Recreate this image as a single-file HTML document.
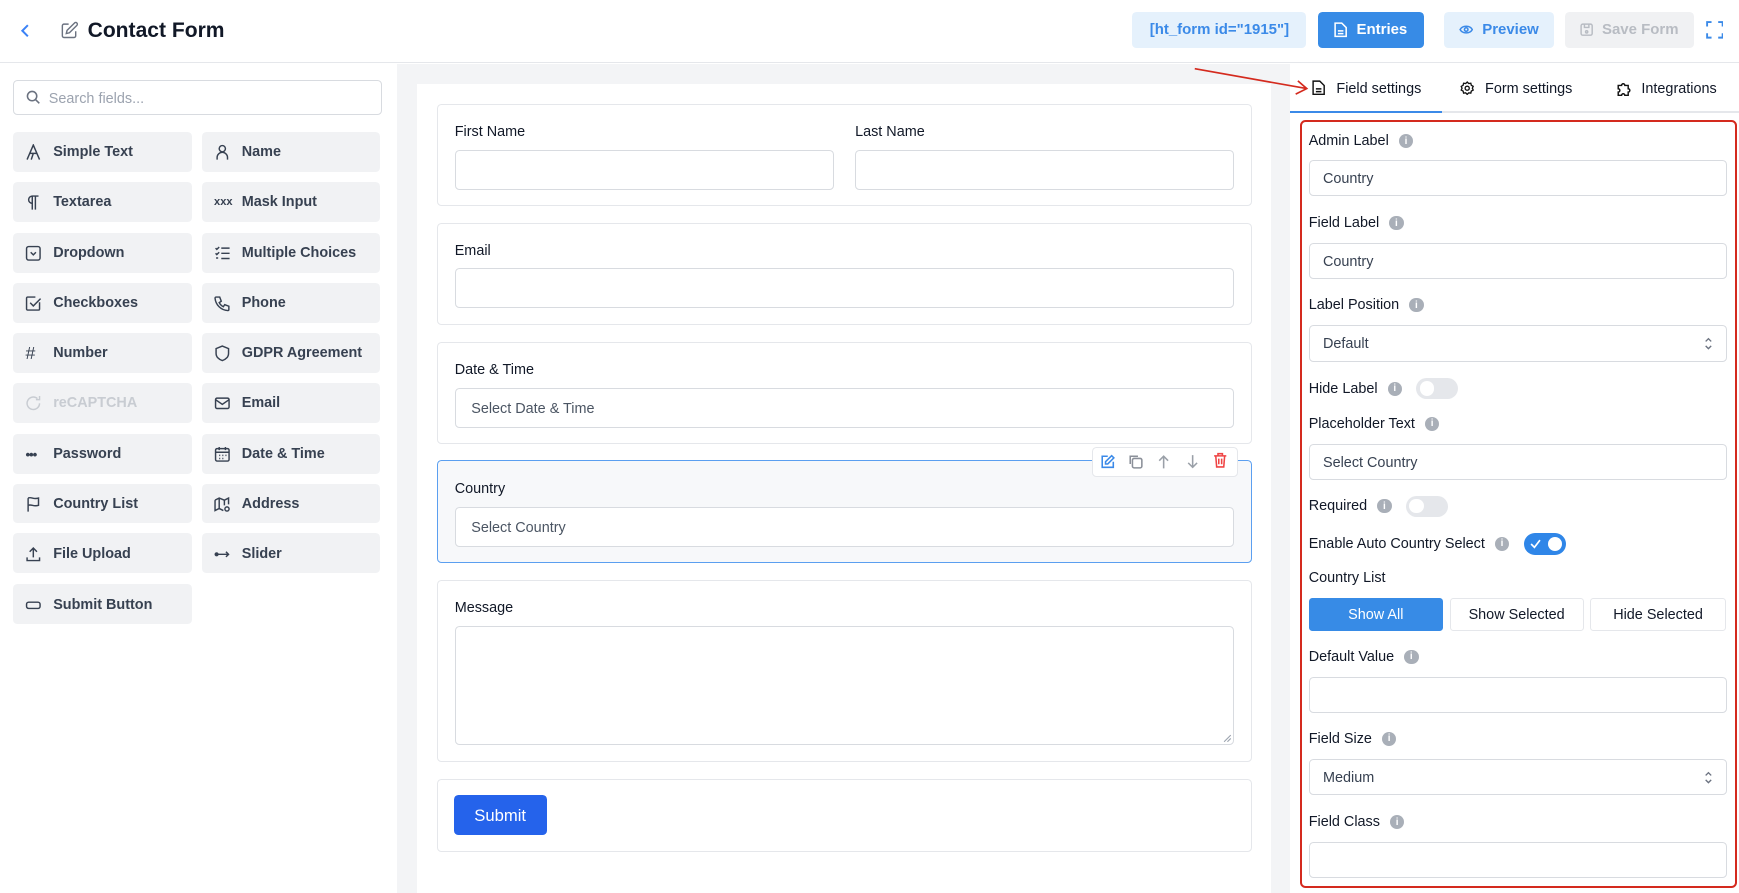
<!DOCTYPE html>
<html><head><meta charset="utf-8"><style>
*{box-sizing:border-box;margin:0;padding:0}
html,body{width:1739px;height:893px;overflow:hidden;background:#fff}
body{font-family:"Liberation Sans",Arial,sans-serif;color:#111827}
#w{position:absolute;left:0;top:0;width:1568px;height:805px;zoom:1.10906}
.a{position:absolute}
.hdr{left:0;top:0;width:1568px;height:57px;border-bottom:1px solid #e5e7eb;background:#fff}
.btn{position:absolute;top:11px;height:32px;border-radius:4px;font-size:13.5px;font-weight:bold;display:flex;align-items:center;justify-content:center;gap:8px}
.fb{position:absolute;width:161px;height:36px;background:#f1f2f4;border-radius:4px;font-size:13px;font-weight:bold;color:#374151;display:flex;align-items:center;padding-left:11px;gap:10px;padding-top:1px}
.fb svg{width:15px;height:15px;flex:none}
.card{position:absolute;left:394px;width:735px;border:1px solid #e5e7eb;border-radius:4px;background:#fff}
.lbl{position:absolute;font-size:13px;color:#111827;margin-top:1px}
.inp{position:absolute;height:36px;border:1px solid #d8dbe0;border-radius:4px;background:#fff;font-size:13px;color:#4b5563;display:flex;align-items:center;padding-left:14px;padding-top:2px}
.rl{position:absolute;left:1180px;font-size:13px;color:#111827;display:flex;align-items:center;gap:9px;margin-top:1px}
.i{width:13px;height:13px;border-radius:50%;background:#a9afb8;color:#fff;font-size:9px;font-weight:bold;display:inline-flex;align-items:center;justify-content:center}
.ri{position:absolute;left:1180px;width:377px;height:33px;border:1px solid #d8dbe0;border-radius:4px;font-size:13px;color:#374151;display:flex;align-items:center;padding-left:12px;padding-top:2px}
.tg{width:38px;height:19px;border-radius:10px;background:#e5e7eb;position:relative;margin-left:4px}
.tg:after{content:"";position:absolute;left:3px;top:3px;width:13px;height:13px;border-radius:50%;background:#fff}
.tg.on{background:#2f86e8}
.tg.on:after{left:22px}
.chev{position:absolute;right:12px;top:10px}
</style></head><body><div id="w">
<div class="a hdr"></div>
<svg class="a" style="left:17px;top:21px" width="12" height="14" viewBox="0 0 12 14"><path d="M8 2L3 7l5 5" fill="none" stroke="#3b82f6" stroke-width="1.8"/></svg>
<svg class="a" style="left:54px;top:19px" width="17" height="17" viewBox="0 0 24 24" fill="none" stroke="#6b7280" stroke-width="1.8"><path d="M11 4H5a2 2 0 00-2 2v13a2 2 0 002 2h13a2 2 0 002-2v-6"/><path d="M18.5 2.5a2.1 2.1 0 013 3L12 15l-4 1 1-4z"/></svg>
<div class="a" style="left:79px;top:17px;font-size:19px;font-weight:bold">Contact Form</div>
<div class="btn" style="left:1021px;width:157px;background:#e5f1fc;color:#3b8ae8;font-weight:bold">[ht_form id="1915"]</div>
<div class="btn" style="left:1188px;width:96px;background:#378be6;color:#fff"><svg width="12" height="14" viewBox="0 0 12 14" fill="none" stroke="#fff" stroke-width="1.4"><path d="M1 1h6l4 4v8H1z M3.5 8h5M3.5 10.5h5"/></svg>Entries</div>
<div class="btn" style="left:1302px;width:99px;background:#e5f1fc;color:#3b8ae8"><svg width="13" height="10" viewBox="0 0 13 10" fill="none" stroke="#3b8ae8" stroke-width="1.4"><path d="M1 5c2-4 9-4 11 0c-2 4-9 4-11 0z"/><circle cx="6.5" cy="5" r="1.6"/></svg>Preview</div>
<div class="btn" style="left:1411px;width:116px;background:#f0f1f3;color:#b8bcc3"><svg width="12" height="12" viewBox="0 0 12 12" fill="none" stroke="#b8bcc3" stroke-width="1.3"><rect x="1" y="1" width="10" height="10" rx="1.5"/><path d="M4 1v3h4V1"/><circle cx="6" cy="8" r="1"/></svg>Save Form</div>
<svg class="a" style="left:1538px;top:19px" width="16" height="16" viewBox="0 0 16 16" fill="none" stroke="#3b8ae8" stroke-width="1.7"><path d="M1 5V1h4M11 1h4v4M15 11v4h-4M5 15H1v-4"/></svg>

<div class="a" style="left:12px;top:72px;width:332px;height:32px;border:1px solid #d8dbe0;border-radius:4px"></div>
<svg class="a" style="left:23px;top:81px" width="13" height="13" viewBox="0 0 13 13" fill="none" stroke="#6b7280" stroke-width="1.4"><circle cx="5.5" cy="5.5" r="4.2"/><path d="M8.7 8.7L12 12"/></svg>
<div class="a" style="left:44px;top:82px;font-size:13px;color:#9ca3af">Search fields...</div>

<div class="fb" style="left:12px;top:119px"><svg viewBox="0 0 16 16" fill="none" stroke="#374151" stroke-width="1.4"><path d="M2 15L8 1l6 14M5 9h6M6 15L8 9"/></svg>Simple Text</div>
<div class="fb" style="left:182px;top:119px"><svg viewBox="0 0 16 16" fill="none" stroke="#374151" stroke-width="1.4"><circle cx="8" cy="4.5" r="3"/><path d="M3 15v-2a5 5 0 0110 0v2"/></svg>Name</div>
<div class="fb" style="left:12px;top:164px"><svg viewBox="0 0 16 16" fill="none" stroke="#374151" stroke-width="1.4"><path d="M7 15V2h6M10 2v13M7 2a3.5 3.5 0 000 7"/></svg>Textarea</div>
<div class="fb" style="left:182px;top:164px"><span style="font-size:10px;width:15px">xxx</span>Mask Input</div>
<div class="fb" style="left:12px;top:210px"><svg viewBox="0 0 16 16" fill="none" stroke="#374151" stroke-width="1.4"><rect x="1.5" y="1.5" width="13" height="13" rx="2"/><path d="M5.5 7l2.5 2.5L10.5 7"/></svg>Dropdown</div>
<div class="fb" style="left:182px;top:210px"><svg viewBox="0 0 16 16" fill="none" stroke="#374151" stroke-width="1.4"><path d="M7 3h8M7 8h8M7 13h8M1.5 3l1.2 1.2L5 2M1.5 8l1.2 1.2L5 7M2 12.5h2"/></svg>Multiple Choices</div>
<div class="fb" style="left:12px;top:255px"><svg viewBox="0 0 16 16" fill="none" stroke="#374151" stroke-width="1.4"><path d="M14 7v6.5a1 1 0 01-1 1H2.5a1 1 0 01-1-1V3a1 1 0 011-1H10"/><path d="M5 7.5l3 3 7-7"/></svg>Checkboxes</div>
<div class="fb" style="left:182px;top:255px"><svg viewBox="0 0 16 16" fill="none" stroke="#374151" stroke-width="1.4"><path d="M2 2h3.5l1.5 4-2 1.3a9 9 0 004 4l1.3-2 4 1.5V14a1 1 0 01-1 1A13 13 0 011 3a1 1 0 011-1z"/></svg>Phone</div>
<div class="fb" style="left:12px;top:300px"><span style="font-size:16px;width:15px;font-weight:normal">#</span>Number</div>
<div class="fb" style="left:182px;top:300px"><svg viewBox="0 0 16 16" fill="none" stroke="#374151" stroke-width="1.4"><path d="M8 1l6 2.5v4.5c0 3.5-2.7 6-6 7-3.3-1-6-3.5-6-7V3.5z"/></svg>GDPR Agreement</div>
<div class="fb" style="left:12px;top:345px;color:#c8ccd2"><svg viewBox="0 0 16 16" fill="none" stroke="#c8ccd2" stroke-width="1.4"><path d="M14 8a6 6 0 11-2-4.5M14 1v3.5h-3.5"/></svg>reCAPTCHA</div>
<div class="fb" style="left:182px;top:345px"><svg viewBox="0 0 16 16" fill="none" stroke="#374151" stroke-width="1.4"><rect x="1.5" y="3" width="13" height="10" rx="1.5"/><path d="M1.5 4.5L8 9l6.5-4.5"/></svg>Email</div>
<div class="fb" style="left:12px;top:391px"><span style="font-size:12px;width:15px;letter-spacing:-1px">•••</span>Password</div>
<div class="fb" style="left:182px;top:391px"><svg viewBox="0 0 16 16" fill="none" stroke="#374151" stroke-width="1.4"><rect x="1.5" y="2.5" width="13" height="12" rx="1.5"/><path d="M1.5 6h13M5 1v3M11 1v3M5 9h1M8 9h1M11 9h1M5 12h1M8 12h1"/></svg>Date &amp; Time</div>
<div class="fb" style="left:12px;top:436px"><svg viewBox="0 0 16 16" fill="none" stroke="#374151" stroke-width="1.4"><path d="M3 15V2M3 2c3-1.5 5 1.5 10 0v7c-5 1.5-7-1.5-10 0"/></svg>Country List</div>
<div class="fb" style="left:182px;top:436px"><svg viewBox="0 0 16 16" fill="none" stroke="#374151" stroke-width="1.4"><path d="M1 4l4-2 5 2 4-2v6M1 4v10l4-2 4 2M5 2v10M10 4v5"/><circle cx="12.5" cy="12.5" r="2"/></svg>Address</div>
<div class="fb" style="left:12px;top:481px"><svg viewBox="0 0 16 16" fill="none" stroke="#374151" stroke-width="1.4"><path d="M2 11v3h12v-3M8 11V2M4.5 5.5L8 2l3.5 3.5"/></svg>File Upload</div>
<div class="fb" style="left:182px;top:481px"><svg viewBox="0 0 16 16" fill="none" stroke="#374151" stroke-width="1.4"><circle cx="2.5" cy="8" r="1.3" fill="#374151"/><path d="M4 8h10M11.5 5.5L14 8l-2.5 2.5"/></svg>Slider</div>
<div class="fb" style="left:12px;top:527px"><svg viewBox="0 0 16 16" fill="none" stroke="#374151" stroke-width="1.4"><rect x="1.5" y="5" width="13" height="6" rx="2"/></svg>Submit Button</div>

<div class="a" style="left:358px;top:58px;width:805px;height:747px;background:#f3f4f6"></div>
<div class="a" style="left:376px;top:76px;width:770px;height:729px;background:#fff"></div>

<div class="card" style="top:94px;height:92px"></div>
<div class="lbl" style="left:410px;top:111px">First Name</div>
<div class="lbl" style="left:771px;top:111px">Last Name</div>
<div class="inp" style="left:410px;top:135px;width:342px"></div>
<div class="inp" style="left:771px;top:135px;width:342px"></div>

<div class="card" style="top:201px;height:92px"></div>
<div class="lbl" style="left:410px;top:218px">Email</div>
<div class="inp" style="left:410px;top:242px;width:703px"></div>

<div class="card" style="top:308px;height:92px"></div>
<div class="lbl" style="left:410px;top:325px">Date &amp; Time</div>
<div class="inp" style="left:410px;top:350px;width:703px">Select Date &amp; Time</div>

<div class="card" style="top:415px;height:93px;background:#f7f8fa;border-color:#5b9ff0"></div>
<div class="a" style="left:985px;top:403px;width:131px;height:27px;background:#fff;border:1px solid #e5e7eb;border-radius:4px"></div>
<svg class="a" style="left:992px;top:409px" width="14" height="14" viewBox="0 0 14 14" fill="none" stroke="#3b8ae8" stroke-width="1.4"><path d="M7 2H2v10h10V7"/><path d="M10.5 1.5l2 2L7 9H5V7z"/></svg>
<svg class="a" style="left:1017px;top:409px" width="14" height="14" viewBox="0 0 14 14" fill="none" stroke="#8b9099" stroke-width="1.4"><rect x="4" y="4" width="8.5" height="8.5" rx="1.5"/><path d="M9 2H2v7"/></svg>
<svg class="a" style="left:1043px;top:409px" width="12" height="14" viewBox="0 0 12 14" fill="none" stroke="#9aa0a8" stroke-width="1.4"><path d="M6 13V2M2 6l4-4 4 4"/></svg>
<svg class="a" style="left:1069px;top:409px" width="12" height="14" viewBox="0 0 12 14" fill="none" stroke="#9aa0a8" stroke-width="1.4"><path d="M6 1v11M2 8l4 4 4-4"/></svg>
<svg class="a" style="left:1094px;top:408px" width="13" height="15" viewBox="0 0 13 15" fill="none" stroke="#ef4444" stroke-width="1.4"><path d="M1 3.5h11M4.5 3.5V1.5h4v2M2.5 3.5l.8 10h6.4l.8-10M5.2 6v5M7.8 6v5"/></svg>
<div class="lbl" style="left:410px;top:433px">Country</div>
<div class="inp" style="left:410px;top:457px;width:703px">Select Country</div>

<div class="card" style="top:523px;height:164px"></div>
<div class="lbl" style="left:410px;top:540px">Message</div>
<div class="inp" style="left:410px;top:564px;width:703px;height:108px"></div>
<svg class="a" style="left:1103px;top:662px" width="8" height="8" viewBox="0 0 8 8" stroke="#9ca3af"><path d="M1 7L7 1M4 7L7 4"/></svg>

<div class="card" style="top:702px;height:66px"></div>
<div class="a" style="left:409px;top:717px;width:84px;height:36px;background:#2563eb;border-radius:4px;color:#fff;font-size:15px;display:flex;align-items:center;justify-content:center;padding-top:1px">Submit</div>

<div class="a" style="left:1163px;top:58px;width:405px;height:747px;background:#fff"></div>
<div class="a" style="left:1163px;top:100px;width:405px;height:2px;background:#e5e7eb"></div>
<div class="a" style="left:1163px;top:100px;width:137px;height:2px;background:#3b8ae8"></div>
<svg class="a" style="left:1183px;top:72px" width="12" height="14" viewBox="0 0 12 14" fill="none" stroke="#111" stroke-width="1.3"><path d="M1 1h6l4 4v8H1z M3.5 8h5M3.5 10.5h5"/></svg>
<div class="a" style="left:1205px;top:73px;font-size:13px">Field settings</div>
<svg class="a" style="left:1316px;top:73px" width="13" height="13" viewBox="0 0 14 14" fill="none" stroke="#111" stroke-width="1.3"><circle cx="7" cy="7" r="2"/><path d="M7 1l1.5 1.5 2-.3.5 2 1.8 1L12 7l.8 1.8-1.8 1-.5 2-2-.3L7 13l-1.5-1.5-2 .3-.5-2-1.8-1L2 7l-.8-1.8 1.8-1 .5-2 2 .3z"/></svg>
<div class="a" style="left:1339px;top:73px;font-size:13px">Form settings</div>
<svg class="a" style="left:1457px;top:73px" width="14" height="14" viewBox="0 0 14 14" fill="none" stroke="#111" stroke-width="1.3"><path d="M2 4h3a1.5 1.5 0 013 0h3v3a1.5 1.5 0 010 3v3H8a1.5 1.5 0 00-3 0H2v-3a1.5 1.5 0 000-3z"/></svg>
<div class="a" style="left:1480px;top:73px;font-size:13px">Integrations</div>

<svg class="a" style="left:1070px;top:56px" width="115" height="32" viewBox="0 0 115 32" fill="none" stroke="#d42a1e" stroke-width="1.5"><path d="M7 6L108 24M100 17l8 7-10 5"/></svg>
<div class="a" style="left:1172px;top:108px;width:394px;height:693px;border:2px solid #d42a1e;border-radius:5px"></div>

<div class="rl" style="top:119px">Admin Label <span class="i">i</span></div>
<div class="ri" style="top:144px">Country</div>
<div class="rl" style="top:193px">Field Label <span class="i">i</span></div>
<div class="ri" style="top:219px">Country</div>
<div class="rl" style="top:267px">Label Position <span class="i">i</span></div>
<div class="ri" style="top:293px">Default<svg class="chev" width="8" height="12" viewBox="0 0 8 12" fill="none" stroke="#6b7280" stroke-width="1.2"><path d="M1.5 4L4 1.5 6.5 4M1.5 8L4 10.5 6.5 8"/></svg></div>
<div class="rl" style="top:340px">Hide Label <span class="i">i</span><span class="tg"></span></div>
<div class="rl" style="top:374px">Placeholder Text <span class="i">i</span></div>
<div class="ri" style="top:400px">Select Country</div>
<div class="rl" style="top:446px">Required <span class="i">i</span><span class="tg"></span></div>
<div class="rl" style="top:480px">Enable Auto Country Select <span class="i">i</span><span class="tg on"><svg style="position:absolute;left:6px;top:5px" width="10" height="9" viewBox="0 0 10 9" fill="none" stroke="#fff" stroke-width="1.5"><path d="M1 4.5l3 3L9 1"/></svg></span></div>
<div class="rl" style="top:513px">Country List</div>
<div class="a" style="left:1180px;top:539px;width:121px;height:30px;background:#378be6;border-radius:3px;color:#fff;font-size:13px;display:flex;align-items:center;justify-content:center;padding-top:1px">Show All</div>
<div class="a" style="left:1307px;top:539px;width:121px;height:30px;border:1px solid #e5e7eb;border-radius:3px;font-size:13px;display:flex;align-items:center;justify-content:center;padding-top:1px">Show Selected</div>
<div class="a" style="left:1434px;top:539px;width:122px;height:30px;border:1px solid #e5e7eb;border-radius:3px;font-size:13px;display:flex;align-items:center;justify-content:center;padding-top:1px">Hide Selected</div>
<div class="rl" style="top:584px">Default Value <span class="i">i</span></div>
<div class="ri" style="top:610px"></div>
<div class="rl" style="top:658px">Field Size <span class="i">i</span></div>
<div class="ri" style="top:684px">Medium<svg class="chev" width="8" height="12" viewBox="0 0 8 12" fill="none" stroke="#6b7280" stroke-width="1.2"><path d="M1.5 4L4 1.5 6.5 4M1.5 8L4 10.5 6.5 8"/></svg></div>
<div class="rl" style="top:733px">Field Class <span class="i">i</span></div>
<div class="ri" style="top:759px"></div>
</div></body></html>
